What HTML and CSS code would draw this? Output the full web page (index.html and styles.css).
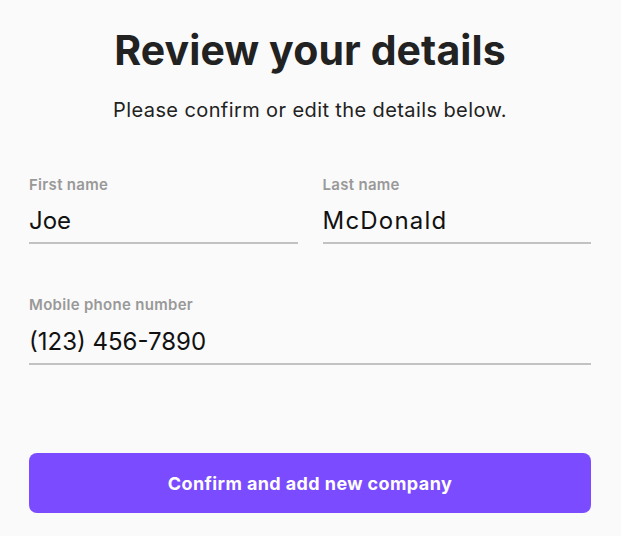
FILE: index.html
```html
<!DOCTYPE html>
<html lang="en">
<head>
<meta charset="utf-8">
<title>Review your details</title>
<link rel="stylesheet" href="styles.css">
</head>
<body>
<main class="page">
  <h1 class="title">Review your details</h1>
  <p class="subtitle">Please confirm or edit the details below.</p>
  <form class="form">
    <div class="row">
      <label class="field">
        <span class="label">First name</span>
        <span class="value">Joe</span>
      </label>
      <label class="field">
        <span class="label">Last name</span>
        <span class="value wide">McDonald</span>
      </label>
    </div>
    <label class="field phone">
      <span class="label">Mobile phone number</span>
      <span class="value">(123) 456-7890</span>
    </label>
    <button type="button" class="btn">Confirm and add new company</button>
  </form>
</main>
</body>
</html>
```

FILE: styles.css
```css
html, body {
  margin: 0;
  padding: 0;
  background: #fafafa;
}
body {
  font-family: "Inter", "Open Sans", sans-serif;
  color: #1f1f1f;
}
.page {
  padding: 26px 30px 0 29px;
}
.title {
  margin: 0;
  text-align: center;
  font-size: 41px;
  line-height: 48px;
  font-weight: 700;
  color: #222;
  letter-spacing: 0.1px;
}
.subtitle {
  margin: 22px 0 0;
  text-align: center;
  font-size: 20px;
  line-height: 28px;
  letter-spacing: 0.4px;
  color: #222;
}
.form {
  margin-top: 51px;
  display: flex;
  flex-direction: column;
}
.row {
  display: grid;
  grid-template-columns: 1fr 1fr;
  column-gap: 25px;
}
.field {
  display: flex;
  flex-direction: column;
  border-bottom: 2px solid #c2c2c2;
}
.label {
  font-size: 15px;
  line-height: 20px;
  font-weight: 600;
  letter-spacing: 0.3px;
  color: #999;
}
.value {
  margin-top: 9px;
  font-size: 24px;
  line-height: 34px;
  color: #111;
  padding-bottom: 4px;
}
.value.wide {
  letter-spacing: 1.2px;
}
.phone {
  margin-top: 51px;
}
.phone .value {
  margin-top: 10px;
}
.btn {
  margin-top: 88px;
  height: 60px;
  border: 0;
  border-radius: 8px;
  background: #7b4bff;
  color: #fff;
  font-family: inherit;
  font-size: 18px;
  font-weight: 700;
  letter-spacing: 0.4px;
}
```
